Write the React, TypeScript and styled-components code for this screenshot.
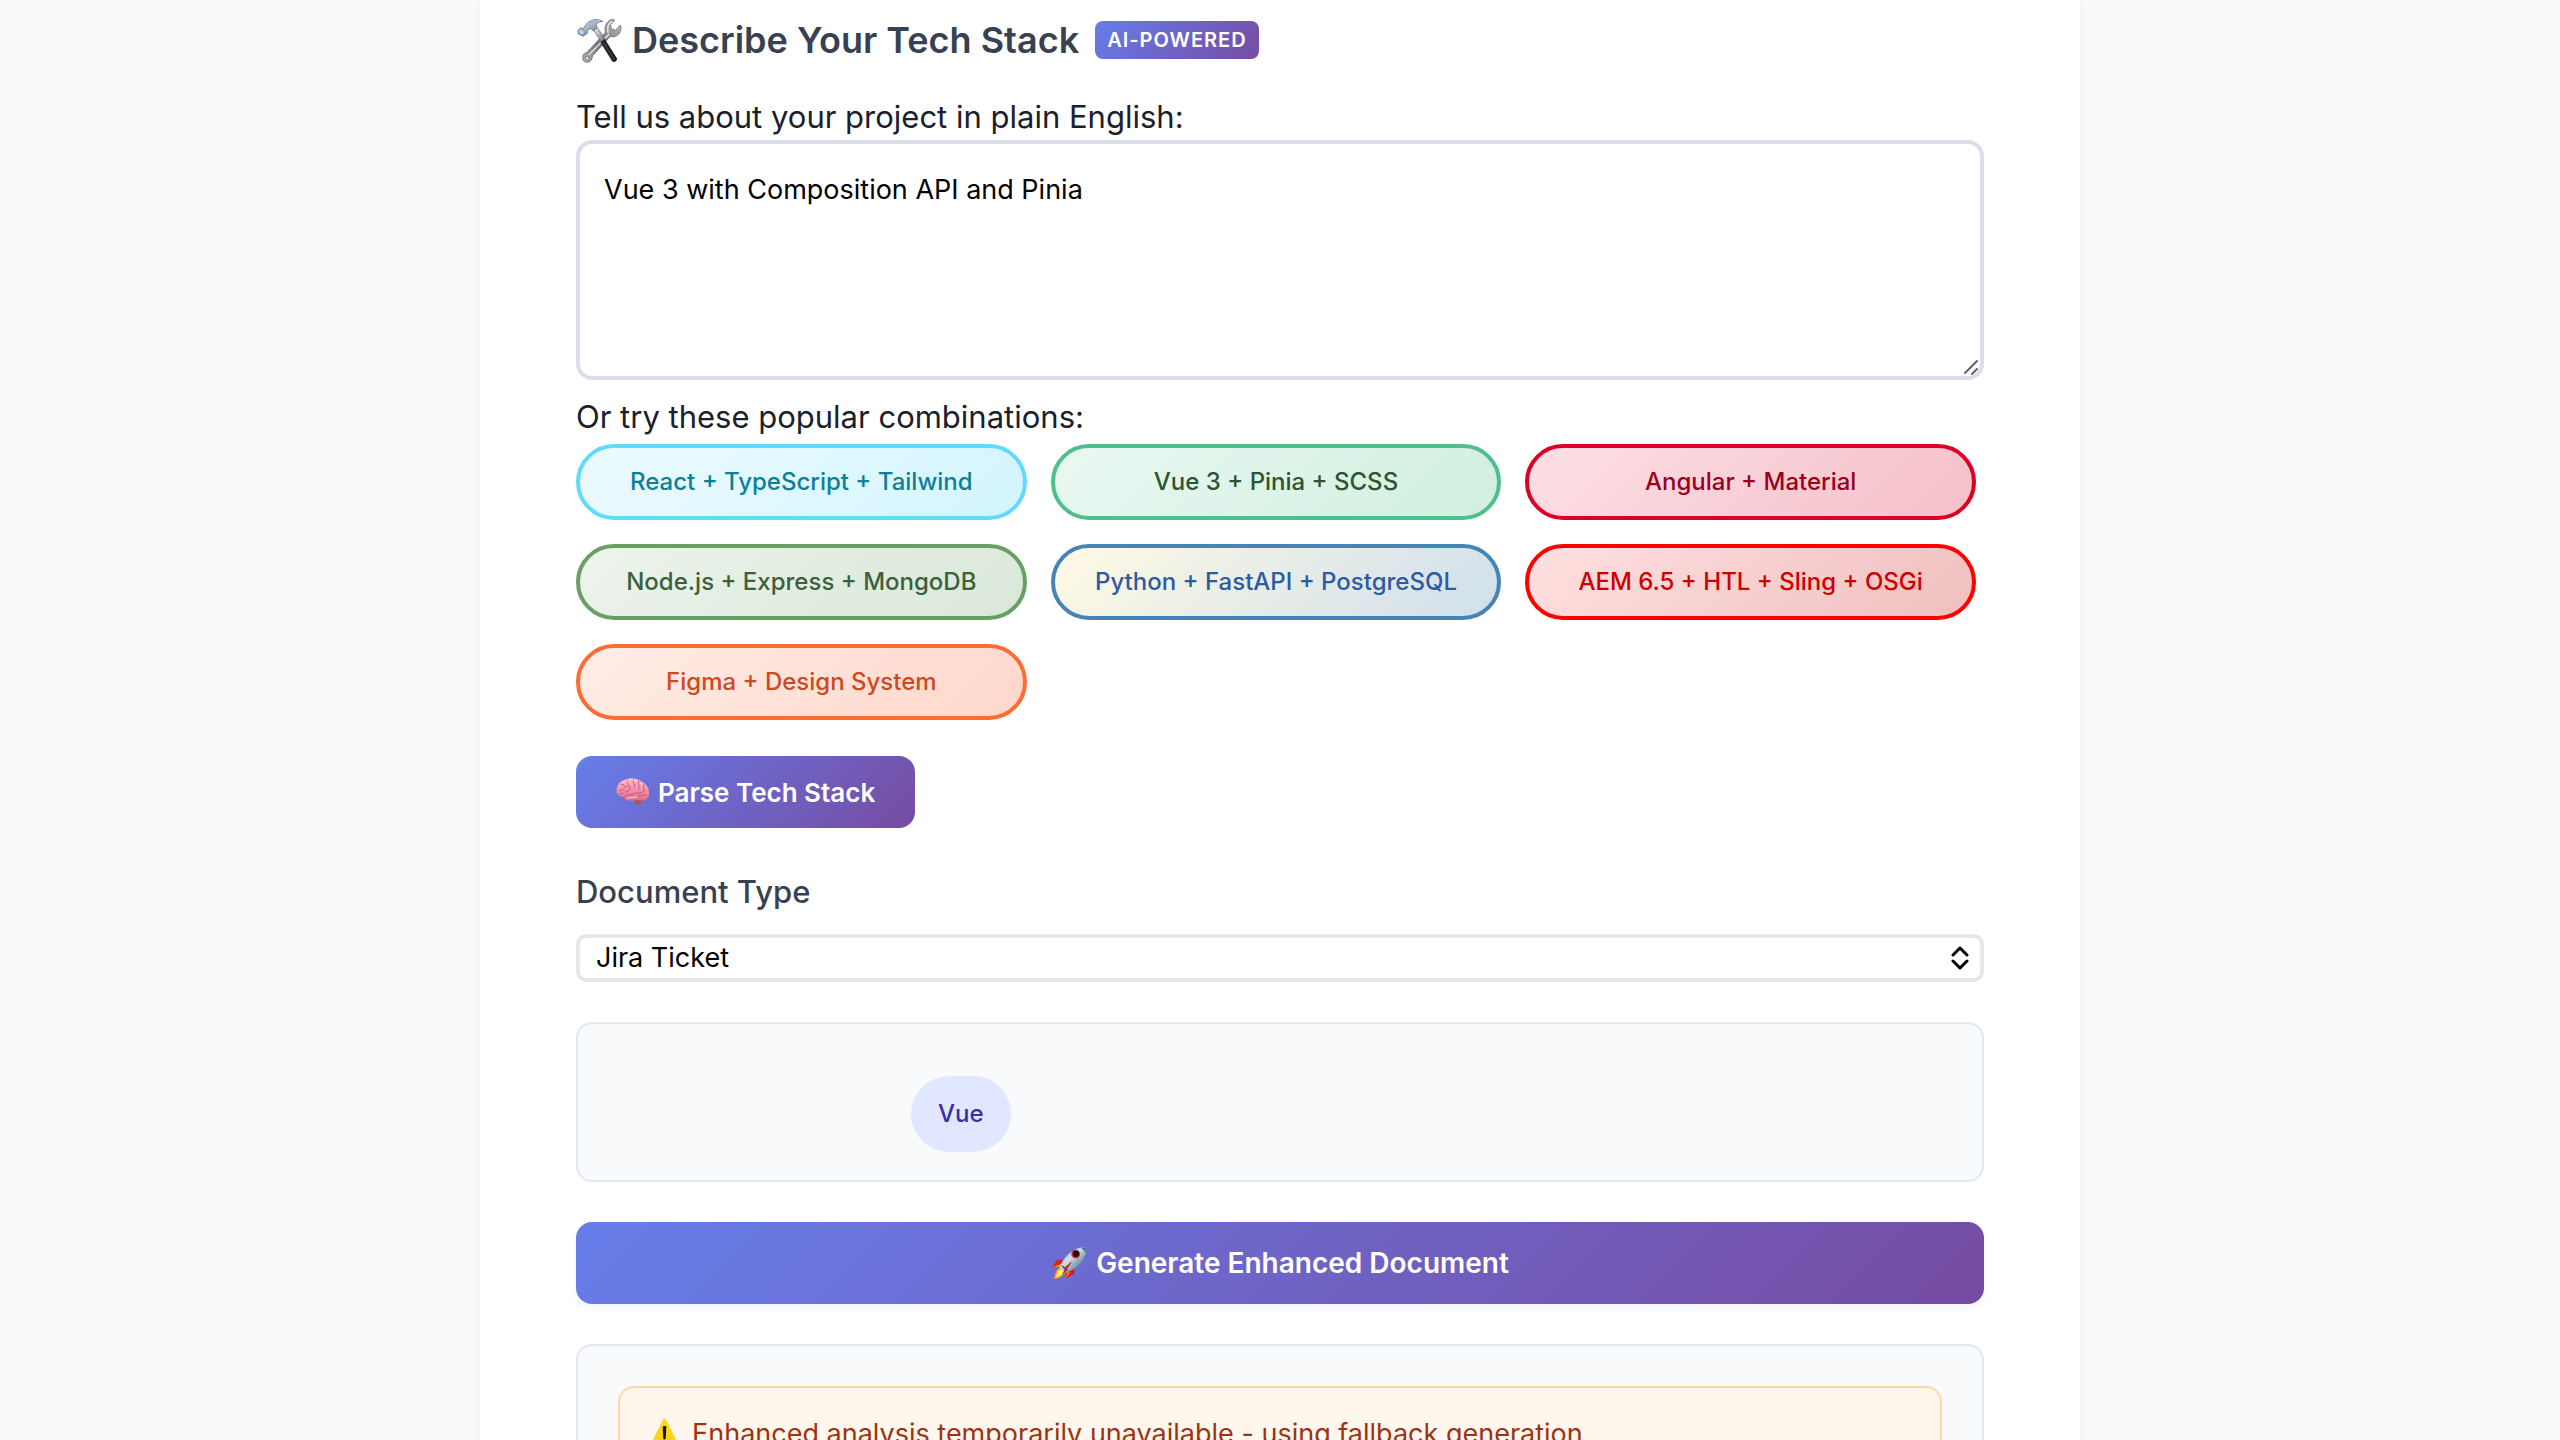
import React, { useState } from 'react';
import styled, { createGlobalStyle } from 'styled-components';

const brand = 'linear-gradient(135deg, #667eea 0%, #764ba2 100%)';

const GlobalStyle = createGlobalStyle`
  *, *::before, *::after { box-sizing: border-box; }
  body {
    margin: 0;
    background: #f8fafc;
    color: #1a202c;
    font-family: Inter, "Noto Sans", sans-serif;
  }
  button, select, textarea { font-family: inherit; }
  svg { display: block; flex: none; }
`;

const Page = styled.div`
  height: 100vh;
  overflow: hidden;
`;

const Card = styled.main`
  max-width: 1600px;
  min-height: 100vh;
  margin: 0 auto;
  padding: 16px 96px 96px;
  background: #fff;
  box-shadow: 0 4px 8px rgba(0, 0, 0, 0.06);
`;

const Header = styled.header`
  display: flex;
  align-items: center;
  gap: 16px;
  height: 48px;
  margin-bottom: 30px;
`;

const Title = styled.h2`
  display: flex;
  align-items: center;
  gap: 10px;
  margin: 0;
  color: #374151;
  font-size: 36px;
  font-weight: 600;
  line-height: 48px;
  white-space: nowrap;
`;

const Badge = styled.span`
  padding: 7px 12px;
  border-radius: 8px;
  background: ${brand};
  color: #fff;
  font-size: 20px;
  font-weight: 600;
  line-height: 24px;
  letter-spacing: 1px;
`;

const Label = styled.label`
  display: block;
  font-size: 31px;
  line-height: 46px;
`;

const Field = styled.div`
  position: relative;
  margin-bottom: 14px;
`;

const Description = styled.textarea`
  display: block;
  width: 100%;
  height: 240px;
  padding: 24px;
  border: 4px solid #dadeeb;
  border-radius: 16px;
  outline: none;
  resize: none;
  background: #fff;
  color: #000;
  font-size: 27px;
  line-height: 44px;
`;

const Grip = styled.svg`
  position: absolute;
  right: 4px;
  bottom: 4px;
  pointer-events: none;
`;

const Combos = styled.div`
  display: grid;
  grid-template-columns: repeat(3, 1fr);
  gap: 24px;
  max-width: 1400px;
  margin: 4px 0 36px;
`;

const Combo = styled.button<{ $line: string; $ink: string; $from: string; $to: string }>`
  height: 76px;
  padding: 0 24px;
  border: 4px solid ${(p) => p.$line};
  border-radius: 40px;
  background: linear-gradient(135deg, ${(p) => p.$from}, ${(p) => p.$to}) border-box;
  color: ${(p) => p.$ink};
  font-size: 24px;
  font-weight: 500;
  line-height: 28px;
  white-space: nowrap;
  cursor: pointer;
`;

const Action = styled.button<{ $wide?: boolean }>`
  display: flex;
  align-items: center;
  justify-content: center;
  gap: 8px;
  width: ${(p) => (p.$wide ? '100%' : 'auto')};
  height: ${(p) => (p.$wide ? 82 : 72)}px;
  padding: 0 40px;
  border: 0;
  border-radius: 16px;
  background: ${brand};
  box-shadow: ${(p) => (p.$wide ? '0 4px 8px rgba(102, 126, 234, 0.08)' : 'none')};
  color: #fff;
  font-size: ${(p) => (p.$wide ? 28 : 26)}px;
  font-weight: 600;
  cursor: pointer;
`;

const TypeLabel = styled(Label)`
  margin: 40px 0 18px;
  color: #374151;
  font-weight: 500;
  line-height: 48px;
`;

const SelectBox = styled.div`
  position: relative;
`;

const Select = styled.select`
  display: block;
  width: 100%;
  height: 48px;
  padding: 0 48px 0 16px;
  border: 4px solid #e5e7eb;
  border-radius: 10px;
  outline: none;
  appearance: none;
  background: #fff;
  color: #000;
  font-size: 27px;
  line-height: 40px;
`;

const Chevrons = styled.svg`
  position: absolute;
  top: 12px;
  right: 15px;
  pointer-events: none;
`;

const Panel = styled.section<{ $pad: string }>`
  margin: 40px 0;
  padding: ${(p) => p.$pad};
  border: 2px solid #e2e8f0;
  border-radius: 16px;
  background: #f8fafc;
`;

const Tags = styled.div`
  display: flex;
  flex-wrap: wrap;
  gap: 24px;
  max-width: 738px;
  margin: 0 auto;
`;

const Tag = styled.span`
  padding: 0 27px;
  border-radius: 40px;
  background: #e0e7ff;
  color: #3730a3;
  font-size: 24px;
  font-weight: 500;
  line-height: 76px;
`;

const Alert = styled.div`
  display: flex;
  align-items: center;
  gap: 12px;
  padding: 24px 30px;
  border: 2px solid #fed7aa;
  border-radius: 16px;
  background: #fff7ed;
  color: #9a3412;
  font-size: 27px;
  line-height: 44px;
`;

const ToolsIcon = () => (
  <svg width="46" height="46" viewBox="18 18 136 136" aria-hidden="true">
    <defs>
      <linearGradient id="steel" x1="0" y1="0" x2="1" y2="1">
        <stop offset="0" stopColor="#eef2f6" />
        <stop offset=".5" stopColor="#a4acb6" />
        <stop offset="1" stopColor="#5c626b" />
      </linearGradient>
      <linearGradient id="shaft" x1="0" y1="1" x2="1" y2="0">
        <stop offset="0" stopColor="#b9b9bf" />
        <stop offset=".4" stopColor="#7d6c70" />
        <stop offset="1" stopColor="#b7bdc5" />
      </linearGradient>
    </defs>
    <path
      d="M38 137C36 129 43 124 50 123L105 63C101 46 108 31 123 25L133 27L120 41L123 53L135 57L149 42C156 59 145 75 127 77L119 76L67 133C66 145 59 153 49 152C41 151 37 146 38 137Z"
      fill="url(#shaft)"
      stroke="#5f646c"
      strokeWidth="2"
    />
    <path d="M113 65C109 51 113 38 124 31M56 130L116 68" fill="none" stroke="#e8ebef" strokeWidth="4" />
    <circle cx="51" cy="140" r="5" fill="#fff" stroke="#4d4f55" strokeWidth="2" />
    <path d="M70 57L81 49L106 86L95 95Z" fill="url(#steel)" stroke="#646b74" strokeWidth="2" />
    <path d="M90 93L103 83L139 140C142 147 131 155 125 149Z" fill="#232326" />
    <path d="M99 93L130 143" stroke="#48484d" strokeWidth="3" />
    <path
      d="M24 57L33 49L39 53L50 37C65 23 83 23 97 31C82 32 75 38 80 49L69 60L61 51L52 59L51 67L39 75L25 68Z"
      fill="url(#steel)"
      stroke="#59616b"
      strokeWidth="2"
    />
    <path d="M49 43C62 28 75 27 89 30" fill="none" stroke="#9cbde0" strokeWidth="6" />
    <ellipse cx="34" cy="62" rx="8" ry="10" transform="rotate(-42 34 62)" fill="#b9d4ef" stroke="#68788b" strokeWidth="2" />
  </svg>
);

const BrainIcon = () => (
  <svg width="34" height="30" viewBox="23 24 102 90" aria-hidden="true">
    <defs>
      <linearGradient id="cortex" x1="0" y1="0" x2="0" y2="1">
        <stop offset="0" stopColor="#ffb9cb" />
        <stop offset="1" stopColor="#e26a8c" />
      </linearGradient>
    </defs>
    <path d="M78 94C88 87 101 88 104 97C104 107 88 111 81 104Z" fill="#b75357" />
    <path
      d="M25 69C23 53 32 38 48 33C63 25 84 27 97 36C112 42 124 58 122 74C123 87 111 96 98 94C86 92 80 93 72 95C58 97 48 93 47 84C37 83 27 80 25 69Z"
      fill="url(#cortex)"
    />
    <path
      d="M47 84C53 75 61 80 72 75C84 70 95 76 106 66M32 66C38 59 44 67 50 57M40 46C48 44 46 55 57 53M57 35C52 45 65 45 65 58C65 65 57 67 52 69M75 31C69 41 82 42 79 55M91 37C86 46 97 48 91 61M106 47C101 55 111 59 107 67M113 78C104 75 98 81 91 82M33 75C37 71 42 75 46 73"
      fill="none"
      stroke="#c95779"
      strokeWidth="3"
      strokeLinecap="round"
    />
    <path
      d="M45 40C50 36 54 36 57 37M68 33C72 32 78 34 79 36M95 42C101 44 103 48 103 51M57 88C67 84 76 87 86 84"
      fill="none"
      stroke="#ffd7df"
      strokeWidth="3"
      strokeLinecap="round"
    />
  </svg>
);

const RocketIcon = () => (
  <svg width="37" height="36" viewBox="22 21 111 108" aria-hidden="true">
    <defs>
      <linearGradient id="hull" x1="0" y1="0" x2="1" y2="1">
        <stop offset="0" stopColor="#4b93bb" />
        <stop offset=".4" stopColor="#d4e2ea" />
        <stop offset=".65" stopColor="#8b9fae" />
        <stop offset="1" stopColor="#22607f" />
      </linearGradient>
    </defs>
    <path d="M65 65L39 66L25 91L52 86Z" fill="#dc2411" />
    <path d="M26 89L51 77L50 86Z" fill="#ff932c" />
    <path d="M93 85L91 108L64 123L70 98Z" fill="#ee170d" />
    <path d="M64 123L73 101L79 105Z" fill="#ff8127" />
    <path d="M50 88C37 95 34 107 31 123C46 124 60 113 65 100Z" fill="#f8a51b" />
    <path d="M51 94C42 98 39 108 38 118C48 116 56 109 60 100Z" fill="#fff37c" />
    <path d="M48 89C59 57 88 27 128 27C130 55 112 86 67 105Z" fill="url(#hull)" />
    <path d="M110 29L128 27L127 45C123 38 118 33 110 29Z" fill="#397d9d" />
    <path d="M55 83L71 99" stroke="#24566d" strokeWidth="4" />
    <circle cx="96" cy="48" r="13" fill="#bd2026" />
    <circle cx="97" cy="47" r="9" fill="#180f16" />
    <path d="M83 72L57 112L65 86Z" fill="#e31d11" />
    <path d="M83 72L60 105" stroke="#811c1a" strokeWidth="2" />
  </svg>
);

const WarningIcon = () => (
  <svg width="30" height="30" viewBox="0 0 30 30" aria-hidden="true">
    <path d="M13 .8C13.7-.4 15.3-.4 16 .8L28.7 26C29.4 27.4 28.7 28.4 27 28.4H2C.3 28.4-.4 27.4.3 26Z" fill="#ffd21f" />
    <path d="M12.7 8.2C12.7 6.6 16.3 6.6 16.3 8.2L15.7 19.6C15.6 20.8 13.4 20.8 13.3 19.6Z" fill="#161616" />
    <circle cx="14.5" cy="24.2" r="2" fill="#161616" />
  </svg>
);

const combos = [
  { name: 'React + TypeScript + Tailwind', line: '#61dafb', ink: '#0d8098', from: '#ecfaff', to: '#d3f5fe' },
  { name: 'Vue 3 + Pinia + SCSS', line: '#4fc08d', ink: '#2c5530', from: '#eaf8f1', to: '#d0efe1' },
  { name: 'Angular + Material', line: '#dd0025', ink: '#9b0020', from: '#fce0e5', to: '#f5bfc8' },
  { name: 'Node.js + Express + MongoDB', line: '#68a063', ink: '#3c6039', from: '#edf4ec', to: '#d9e7d8' },
  { name: 'Python + FastAPI + PostgreSQL', line: '#4584b6', ink: '#2d5aa0', from: '#fffae4', to: '#cfdfec' },
  { name: 'AEM 6.5 + HTL + Sling + OSGi', line: '#ff0000', ink: '#cc0000', from: '#ffe0e0', to: '#f0bfbf' },
  { name: 'Figma + Design System', line: '#ff6b35', ink: '#cc4a20', from: '#ffede7', to: '#ffd7ca' },
];

export default function App() {
  const [text, setText] = useState('Vue 3 with Composition API and Pinia');
  return (
    <Page>
      <GlobalStyle />
      <Card>
        <Header>
          <Title>
            <ToolsIcon />
            Describe Your Tech Stack
          </Title>
          <Badge>AI-POWERED</Badge>
        </Header>

        <Label htmlFor="stack">Tell us about your project in plain English:</Label>
        <Field>
          <Description id="stack" spellCheck={false} value={text} onChange={(e) => setText(e.target.value)} />
          <Grip width="18" height="18" viewBox="0 0 18 18" aria-hidden="true">
            <path d="M3 15L15 3M10 16L15 11" stroke="#636366" strokeWidth="2" strokeLinecap="round" />
          </Grip>
        </Field>

        <Label as="div" id="popular">Or try these popular combinations:</Label>
        <Combos role="group" aria-labelledby="popular">
          {combos.map((c) => (
            <Combo key={c.name} type="button" $line={c.line} $ink={c.ink} $from={c.from} $to={c.to}>
              {c.name}
            </Combo>
          ))}
        </Combos>

        <Action type="button">
          <BrainIcon />
          Parse Tech Stack
        </Action>

        <TypeLabel htmlFor="doc-type">Document Type</TypeLabel>
        <SelectBox>
          <Select id="doc-type" defaultValue="jira">
            <option value="jira">Jira Ticket</option>
          </Select>
          <Chevrons width="18" height="24" viewBox="0 0 18 24" aria-hidden="true">
            <path
              d="M2 9L9 2L16 9M2 15L9 22L16 15"
              fill="none"
              stroke="#000"
              strokeWidth="3"
              strokeLinecap="round"
              strokeLinejoin="round"
            />
          </Chevrons>
        </SelectBox>

        <Panel $pad="52px 40px 28px">
          <Tags>
            <Tag>Vue</Tag>
          </Tags>
        </Panel>

        <Action type="button" $wide>
          <RocketIcon />
          Generate Enhanced Document
        </Action>

        <Panel $pad="40px">
          <Alert role="alert">
            <WarningIcon />
            Enhanced analysis temporarily unavailable - using fallback generation
          </Alert>
        </Panel>
      </Card>
    </Page>
  );
}
